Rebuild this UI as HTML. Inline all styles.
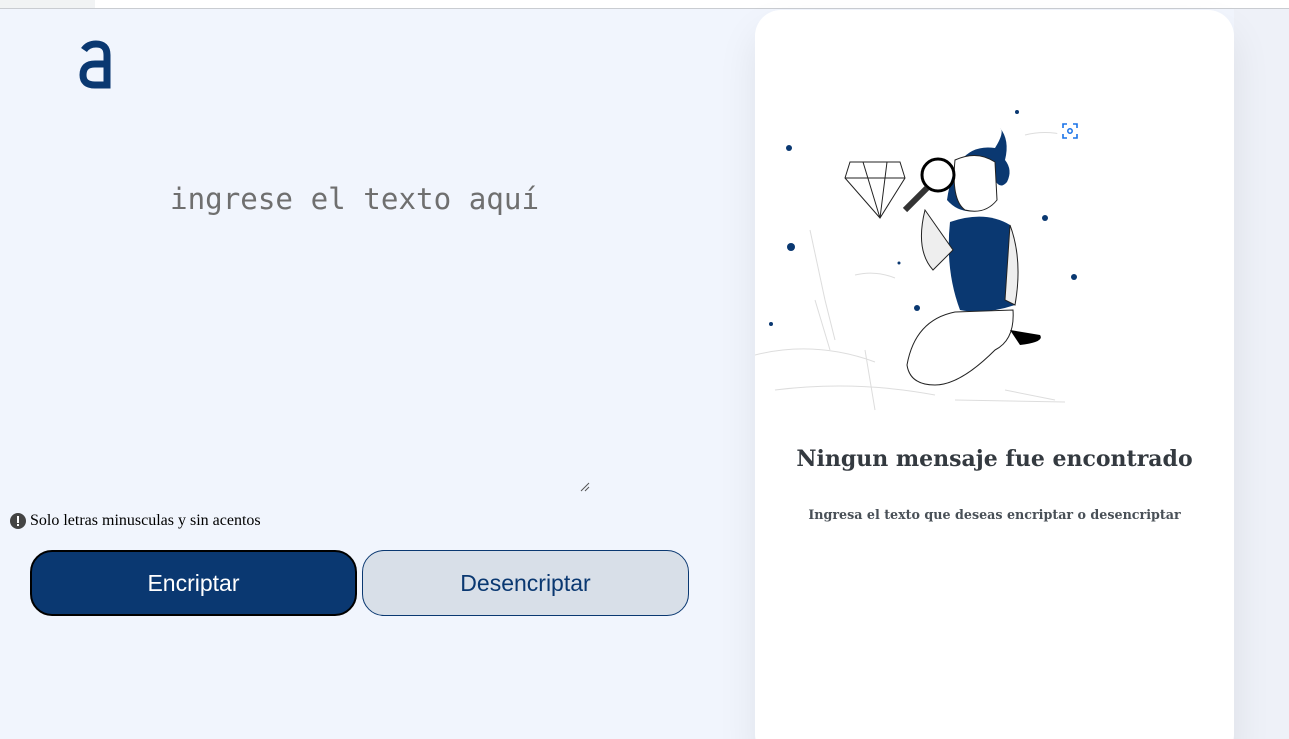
<!DOCTYPE html>
<html style="overflow:hidden"><head><meta charset="utf-8"><style>
html,body{overflow:hidden}
body{margin:0;width:1289px;height:739px;background:#f1f5fd;font-family:"Liberation Sans",sans-serif;position:relative}
.top{position:absolute;left:0;top:0;width:1289px;height:8px;background:#fff;border-bottom:1px solid #c9ccd1}
.top:before{content:"";position:absolute;left:0;top:0;width:95px;height:8px;background:#f1f3f4}
.right{position:absolute;left:1234px;top:9px;width:55px;height:730px;background:#eef1f8}
.card{position:absolute;left:755px;top:10px;width:479px;height:750px;background:#fff;border-radius:26px;box-shadow:0 20px 40px rgba(0,0,0,.08)}
.ph{position:absolute;left:170px;top:182px;font-family:"DejaVu Sans Mono","Liberation Mono",monospace;font-size:29.2px;color:#6f6f6f}
.btn{position:absolute;top:550px;width:327px;height:66px;box-sizing:border-box;border-radius:22px;font-size:23px;display:flex;align-items:center;justify-content:center}
.b1{left:30px;background:#0a3871;color:#fff;border:2px solid #000}
.b2{left:362px;background:#d8dfe8;color:#0a3871;border:1px solid #0a3871}
.warn{position:absolute;left:10px;top:512px;font-family:"Liberation Serif",serif;font-size:16px;color:#000;display:flex;align-items:center;gap:4px}
h2{position:absolute;left:755px;width:479px;top:446px;margin:0;text-align:center;font-family:"DejaVu Serif","Liberation Serif",serif;font-size:22px;color:#343a40;font-weight:bold}
p{position:absolute;left:755px;width:479px;top:507px;margin:0;text-align:center;font-family:"DejaVu Serif","Liberation Serif",serif;font-size:12.7px;font-weight:bold;color:#495057}
</style></head><body>
<div class="top"></div>
<div class="right"></div>
<svg style="position:absolute;left:78px;top:40px" width="36" height="50" viewBox="0 0 36 50"><path d="M6 10 Q10 4 18 4 Q29 4 29 15 V45 H17 Q5 45 5 35 Q5 24 17 24 H29" fill="none" stroke="#0a3871" stroke-width="7"/></svg>
<div class="ph">ingrese el texto aquí</div>
<svg style="position:absolute;left:579px;top:481px" width="12" height="12"><path d="M2 10L10 2M6 10L10 6" stroke="#555" stroke-width="1"/></svg>
<div class="warn"><svg width="16" height="16"><circle cx="8" cy="8" r="8" fill="#444"/><rect x="7" y="3" width="2" height="7" fill="#fff"/><rect x="7" y="11" width="2" height="2" fill="#fff"/></svg>Solo letras minusculas y sin acentos</div>
<div class="btn b1">Encriptar</div>
<div class="btn b2">Desencriptar</div>
<div class="card"></div>
<svg style="position:absolute;left:755px;top:100px" width="350" height="320" viewBox="0 0 350 320">
<g fill="#0a3871"><circle cx="34" cy="48" r="3"/><circle cx="36" cy="147" r="4"/><circle cx="16" cy="224" r="2"/><circle cx="262" cy="12" r="2"/><circle cx="290" cy="118" r="3"/><circle cx="319" cy="177" r="3"/><circle cx="162" cy="208" r="3"/><circle cx="144" cy="163" r="1.5"/></g>
<g fill="none" stroke="#ddd" stroke-width="1"><path d="M55 130 L70 200 L80 240 M60 200 L75 250 M0 255 Q60 240 120 262 M20 290 Q100 280 180 295 M110 250 L120 310 M250 290 L300 300 M200 300 L310 302 M100 175 Q120 170 140 178 M270 35 Q290 30 310 35"/></g>
<path d="M95 62 L145 62 L150 78 L125 118 L90 78Z M90 78 L150 78 M108 62 L125 118 M132 62 L125 118" fill="#fff" stroke="#222"/>
<path d="M192 100 Q200 42 240 48 Q250 32 245 28 Q255 40 250 60 Q258 70 252 82 Q245 90 240 80 L225 110 Q205 115 192 100Z" fill="#0a3871"/>
<path d="M200 60 Q222 50 240 62 L242 100 Q230 115 210 110 Q196 100 200 60Z" fill="#fff" stroke="#222"/>
<path d="M195 122 Q230 110 255 125 Q265 180 260 205 Q230 215 205 210 Q190 170 195 122Z" fill="#0a3871"/>
<path d="M255 125 Q268 160 260 205 L250 200 Z M170 110 Q160 150 178 170 L198 150 Z" fill="#eee" stroke="#222"/>
<path d="M200 212 Q160 220 152 265 Q155 285 180 285 Q205 285 240 250 Q260 240 258 210Z" fill="#fff" stroke="#222"/>
<path d="M255 230 L285 235 Q290 242 265 245Z" fill="#000"/>
<circle cx="183" cy="75" r="16" fill="none" stroke="#000" stroke-width="3"/>
<path d="M172 88 L150 110" stroke="#333" stroke-width="6"/>
</svg>
<svg style="position:absolute;left:1057px;top:118px" width="26" height="26"><circle cx="13" cy="13" r="13" fill="#fff"/><path d="M6 10V6h4M16 6h4v4M20 16v4h-4M10 20H6v-4" fill="none" stroke="#1a73e8" stroke-width="1.6"/><circle cx="13" cy="13" r="2.2" fill="none" stroke="#1a73e8" stroke-width="1.5"/></svg>
<h2>Ningun mensaje fue encontrado</h2>
<p>Ingresa el texto que deseas encriptar o desencriptar</p>
</body></html>
